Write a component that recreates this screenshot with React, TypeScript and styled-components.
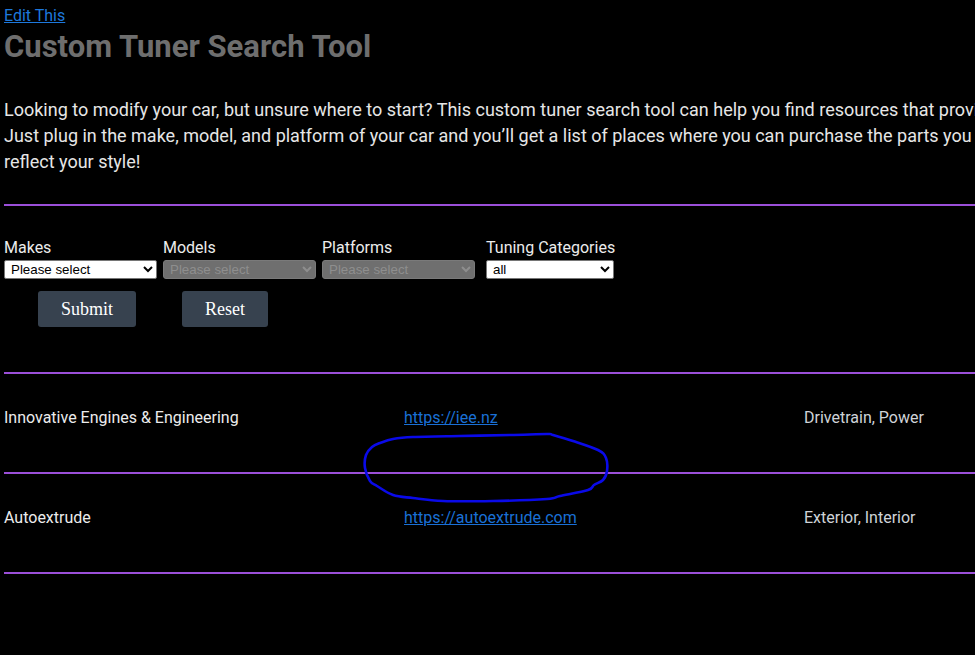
import React from 'react';
import styled, { createGlobalStyle } from 'styled-components';

interface Shop {
  name: string;
  url: string;
  categories: string;
}

const shops: Shop[] = [
  { name: 'Innovative Engines & Engineering', url: 'https://iee.nz', categories: 'Drivetrain, Power' },
  { name: 'Autoextrude', url: 'https://autoextrude.com', categories: 'Exterior, Interior' },
];

// hand drawn circle round the empty space under the first link
const scribble: [number, number][] = [
  [20, 15], [33, 11], [53, 9], [100, 8], [150, 7], [187, 6], [193, 7], [213, 13],
  [238, 22], [246, 30], [247, 43], [243, 52], [234, 57], [228, 62], [200, 68],
  [187, 71], [133, 73], [83, 73], [53, 70], [33, 67], [17, 58], [10, 53], [5, 40],
  [6, 27], [12, 19],
];

const smoothPath = (pts: [number, number][]) => {
  const n = pts.length;
  let d = `M${pts[0][0]},${pts[0][1]}`;
  for (let i = 0; i < n; i++) {
    const p0 = pts[(i - 1 + n) % n];
    const p1 = pts[i];
    const p2 = pts[(i + 1) % n];
    const p3 = pts[(i + 2) % n];
    const c1x = p1[0] + (p2[0] - p0[0]) / 6;
    const c1y = p1[1] + (p2[1] - p0[1]) / 6;
    const c2x = p2[0] - (p3[0] - p1[0]) / 6;
    const c2y = p2[1] - (p3[1] - p1[1]) / 6;
    d += ` C${c1x.toFixed(1)},${c1y.toFixed(1)} ${c2x.toFixed(1)},${c2y.toFixed(1)} ${p2[0]},${p2[1]}`;
  }
  return d;
};

const App: React.FC = () => {
  return (
    <>
      <GlobalStyle />
      <Page>
        <EditLink href="#">Edit This</EditLink>
        <Title>Custom Tuner Search Tool</Title>
        <Intro>
          Looking to modify your car, but unsure where to start? This custom tuner search tool can help you find resources that provide the parts you need.
          <br />
          Just plug in the make, model, and platform of your car and you’ll get a list of places where you can purchase the parts you need to make your car
          <br />
          reflect your style!
        </Intro>
        <Divider />

        <Filters>
          <Field $width={159}>
            <Label>Makes</Label>
            <Select $width={153} defaultValue="">
              <option value="">Please select</option>
            </Select>
          </Field>
          <Field $width={159}>
            <Label>Models</Label>
            <Select $width={153} disabled defaultValue="">
              <option value="">Please select</option>
            </Select>
          </Field>
          <Field $width={164}>
            <Label>Platforms</Label>
            <Select $width={153} disabled defaultValue="">
              <option value="">Please select</option>
            </Select>
          </Field>
          <Field>
            <Label>Tuning Categories</Label>
            <Select $width={128} defaultValue="all">
              <option value="all">all</option>
            </Select>
          </Field>
        </Filters>

        <Buttons>
          <Button type="button">Submit</Button>
          <Button type="button">Reset</Button>
        </Buttons>

        <Divider $top={45} />
        {shops.map((shop) => (
          <React.Fragment key={shop.url}>
            <ResultRow>
              <ShopName>{shop.name}</ShopName>
              <ShopLink href={shop.url}>{shop.url}</ShopLink>
              <ShopTags>{shop.categories}</ShopTags>
            </ResultRow>
            <Divider $top={0} />
          </React.Fragment>
        ))}

        <Scribble width="255" height="80" viewBox="0 0 255 80">
          <path d={smoothPath(scribble)} fill="none" stroke="#0a0ae8" strokeWidth="2.6" strokeLinejoin="round" />
        </Scribble>
      </Page>
    </>
  );
};

export default App;

const GlobalStyle = createGlobalStyle`
  html, body {
    margin: 0;
    padding: 0;
    background: #000;
    overflow-x: hidden;
  }
  body {
    font-family: Roboto, 'Noto Sans', sans-serif;
    color: #e8e8e8;
  }
`;

const Page = styled.div`
  position: relative;
  width: 1200px;
  padding: 4px 0 60px 4px;
`;

const EditLink = styled.a`
  display: inline-block;
  font-size: 16px;
  line-height: 24px;
  color: #1d78dc;
  text-decoration: underline;
`;

const Title = styled.h1`
  margin: 0;
  font-size: 31px;
  line-height: 38px;
  font-weight: 700;
  color: #6e6e6e;
`;

const Intro = styled.p`
  margin: 31px 0 0;
  font-size: 18px;
  line-height: 26px;
  white-space: nowrap;
  color: #e6e6e6;
`;

const Divider = styled.div<{ $top?: number }>`
  height: 2px;
  margin-top: ${(p) => (p.$top ?? 29)}px;
  background: #9b4fd8;
`;

const Filters = styled.div`
  display: flex;
  align-items: flex-start;
  margin-top: 32px;
`;

const Field = styled.div<{ $width?: number }>`
  display: flex;
  flex-direction: column;
  width: ${(p) => (p.$width ? `${p.$width}px` : 'auto')};
`;

const Label = styled.label`
  font-size: 16px;
  line-height: 19px;
  margin-bottom: 3px;
  color: #ececec;
`;

const Select = styled.select<{ $width: number }>`
  width: ${(p) => p.$width}px;
  height: 19px;
  margin: 0;
  padding: 0 0 0 2px;
  font-family: 'Liberation Sans', Arial, sans-serif;
  font-size: 13.33px;
  color: #000;
  background-color: #fff;
  border: 1px solid #767676;
  border-radius: 2px;

  &:disabled {
    opacity: 1;
    color: #8e8e8e;
    background-color: #6f6f6f;
    border-color: #7a7a7a;
    border-radius: 3px;
  }
`;

const Buttons = styled.div`
  display: flex;
  gap: 46px;
  margin-top: 12px;
  padding-left: 34px;
`;

const Button = styled.button`
  height: 36px;
  padding: 0 23px;
  border: none;
  border-radius: 3px;
  background: #37424f;
  color: #fff;
  font-family: 'Liberation Serif', 'Times New Roman', serif;
  font-size: 18px;
  cursor: pointer;
`;

const ResultRow = styled.div`
  display: grid;
  grid-template-columns: 400px 400px 400px;
  padding: 34px 0 45px;
  font-size: 16px;
  line-height: 19px;
`;

const ShopName = styled.span`
  color: #ececec;
`;

const ShopLink = styled.a`
  justify-self: start;
  color: #1a70d6;
  text-decoration: underline;
`;

const ShopTags = styled.span`
  color: #cfd3d8;
`;

const Scribble = styled.svg`
  position: absolute;
  left: 360px;
  top: 428px;
  pointer-events: none;
`;
